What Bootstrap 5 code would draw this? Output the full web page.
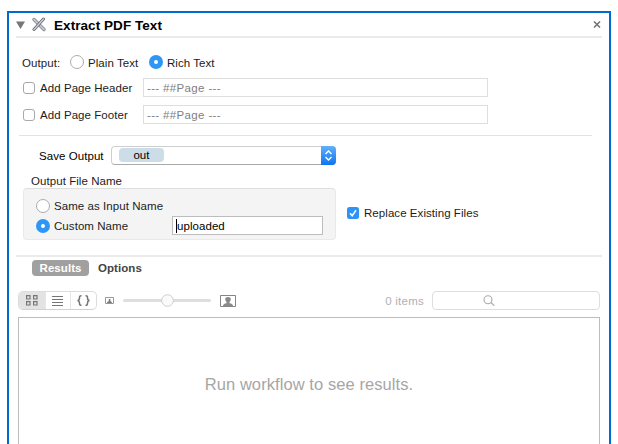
<!DOCTYPE html>
<html lang="en">
<head>
<meta charset="utf-8">
<title>Extract PDF Text</title>
<link href="https://cdn.jsdelivr.net/npm/bootstrap@5.3.0/dist/css/bootstrap.min.css" rel="stylesheet">
<style>
body{font:11.5px/14px "Liberation Sans",Arial,sans-serif;letter-spacing:.06px;color:#1c1c1c;background:#fff;height:444px;overflow:hidden;padding:11px 7px 0}
svg{display:block;flex:none}
.action-panel{width:604px;height:450px;border:2px solid #006bce}
.title-bar{height:25px;margin:0 7px;border-bottom:2px solid #ebebeb}
.tools-icon{margin-left:6px}
.title-text{font-size:13.5px;font-weight:700;line-height:23px;color:#000;margin:2px 0 0 7px}
.close-icon{margin-right:1px}
.radio-dot{width:14px;height:14px;border:1px solid #ababab;border-radius:50%;background:#fff;flex:none}
.radio-dot.on{border:5px solid #2e97f5}
.tick-box{width:12px;height:12px;border:1px solid #a9a9a9;border-radius:3px;background:#fff;flex:none}
.output-row{height:14px;margin:17px 0 9px 13px}
.output-row .output-label{width:48px;padding-top:2px}
.output-row .radio-label{margin-left:4px;padding-top:1px}
.plain-label{width:57px}
.option-row{height:19px;margin-left:14px}
.option-row .tick-label{width:103px;margin-left:5px;padding-top:1px}
.field{border:1px solid #dedede;background:#fff;height:19px;line-height:18px}
.wide-field{width:345px;padding-left:3px;color:#808080;letter-spacing:.35px}
.rule{height:1px;background:#e2e2e2;margin:11px 17px 0 10px}
.save-row{margin:10px 0 0 30px;color:#000}
.save-label{width:66px}
.popup{width:225px;height:19px;border:1px solid #cfcfcf;border-bottom-color:#aaa;border-radius:4px;margin-left:6px}
.token{width:45px;height:14px;margin:1px 0 0 7px;border-radius:4px;background:#cddde8;line-height:15px}
.stepper{width:15px;height:19px;margin:-1px;border-radius:0 4px 4px 0;background:linear-gradient(#63b0f7,#0d74f5)}
.group-title{margin:9px 0 0 22px}
.name-group{width:313px;height:52px;margin-left:14px;border:1px solid #e9e9e9;border-top-color:#dfdfdf;border-radius:4px;background:#f4f4f4;padding:9px 12px 0}
.name-label{margin-left:4px;padding-top:1px}
.custom-row{height:19px;margin-top:3px}
.name-field{width:151px;border-color:#bdbdbd;color:#000;padding-left:3px}
.caret{width:1px;height:14px;background:#000}
.replace-check{margin:0 0 3px 11px}
.replace-check .name-label{margin-left:5px}
.check-on{width:12px;height:12px}
.tab-bar{margin:15px 7px 0;border-top:2px solid #ebebeb;padding:3px 0 0 16px}
.tab-pill{width:57px;height:16px;line-height:17px;border-radius:4px;background:#a0a0a0;color:#fff;font-weight:700}
.tab-plain{line-height:17px;margin-left:9px;color:#444;font-weight:700}
.tool-row{height:19px;margin:14px 9px 0}
.segments{width:79px;height:19px;border:1px solid #dcdcdc;border-bottom-color:#d2d2d2;border-radius:5px;overflow:hidden}
.seg{width:26px;border-left:1px solid #e6e6e6}
.seg.active-seg{background:#e3e3e3;border-left:0}
.small-view{margin-left:8px}
.zoom-track{margin-left:9px}
.large-view{margin-left:9px}
.item-count{color:#b0b0b0;letter-spacing:.25px;padding-top:1px}
.search-box{width:168px;height:19px;border:1px solid #dedede;border-radius:4px;margin-left:8px;padding-left:50px}
.result-area{height:140px;margin:7px 9px 0;border:1px solid #bcbcbc;padding-top:56px;font-size:16.5px;line-height:20px;letter-spacing:.08px;color:#a6a6a6}
</style>
</head>
<body>
<main class="action-panel">
  <header class="title-bar d-flex align-items-center">
    <svg width="9" height="8" viewBox="0 0 9 8"><path d="M0 .5h9L4.500 8z" fill="#777"/></svg>
    <svg class="tools-icon" width="16" height="15" viewBox="0 0 16 15" fill="none" stroke-linecap="round"><path d="M3 2.500l10 10" stroke="#85858f" stroke-width="3.400"/><path d="M3 2.500l10 10" stroke="#c3c3d2" stroke-width="1.800"/><path d="M12.500 2L3 12.500" stroke="#62626c" stroke-width="3"/><path d="M12.500 2L3 12.500" stroke="#d0d0dc" stroke-width="1.400"/></svg>
    <span class="title-text">Extract PDF Text</span>
    <svg class="close-icon ms-auto" width="8" height="7" viewBox="0 0 8 7"><path d="M1 .5l6 6M7 .5l-6 6" stroke="#777" stroke-width="1.600"/></svg>
  </header>

  <div class="output-row d-flex align-items-center">
    <span class="output-label">Output:</span>
    <span class="radio-dot"></span><span class="radio-label"><span class="plain-label d-block">Plain Text</span></span>
    <span class="d-flex align-items-center ms-1"><span class="radio-dot on"></span><span class="radio-label">Rich Text</span></span>
  </div>
  <div class="option-row d-flex align-items-center"><span class="tick-box"></span><span class="tick-label">Add Page Header</span><div class="field wide-field">--- ##Page ---</div></div>
  <div class="option-row d-flex align-items-center mt-2"><span class="tick-box"></span><span class="tick-label">Add Page Footer</span><div class="field wide-field">--- ##Page ---</div></div>
  <div class="rule"></div>

  <div class="save-row d-flex align-items-center">
    <span class="save-label">Save Output</span>
    <div class="popup d-flex justify-content-between">
      <span class="token text-center">out</span>
      <span class="stepper d-flex align-items-center justify-content-center"><svg width="9" height="11" viewBox="0 0 9 11" fill="none" stroke="#fff" stroke-width="1.400"><path d="M1.500 4l3-3 3 3M1.500 7l3 3 3-3"/></svg></span>
    </div>
  </div>

  <div class="group-title">Output File Name</div>
  <div class="d-flex align-items-center">
    <div class="name-group">
      <div class="d-flex align-items-center"><span class="radio-dot"></span><span class="name-label">Same as Input Name</span></div>
      <div class="custom-row d-flex align-items-center"><span class="radio-dot on"></span><span class="name-label">Custom Name</span>
        <div class="field name-field d-flex align-items-center ms-auto"><span class="caret"></span>uploaded</div></div>
    </div>
    <div class="replace-check d-flex align-items-center">
      <svg class="check-on" viewBox="0 0 12 12"><rect width="12" height="12" rx="2.500" fill="#2e94f3"/><path d="M3 6.300l2.200 2.400L9 3.200" fill="none" stroke="#fff" stroke-width="1.500"/></svg>
      <span class="name-label">Replace Existing Files</span>
    </div>
  </div>

  <nav class="tab-bar d-flex"><span class="tab-pill text-center">Results</span><span class="tab-plain">Options</span></nav>

  <div class="tool-row d-flex align-items-center">
    <div class="segments d-flex">
      <span class="seg active-seg d-flex align-items-center justify-content-center"><svg width="12" height="11" viewBox="0 0 12 11" fill="none" stroke="#757575" stroke-width="1.200"><path d="M.6.6h3.400v3.400H.6zM7.600.6H11v3.400H7.600zM.6 6.600h3.400V10H.6zM7.600 6.600H11V10H7.600z"/></svg></span>
      <span class="seg d-flex align-items-center justify-content-center"><svg width="11" height="10" viewBox="0 0 11 10"><path d="M0 .5h11M0 3.500h11M0 6.500h11M0 9.500h11" stroke="#757575"/></svg></span>
      <span class="seg d-flex align-items-center justify-content-center"><svg width="13" height="11" viewBox="0 0 13 11" fill="none" stroke="#757575" stroke-width="1.500"><path d="M4.500.8Q2.500.6 2.500 2.500 2.600 5.300.5 5.500 2.600 5.700 2.500 8.500 2.500 10.400 4.500 10.200M8.500.8Q10.500.6 10.500 2.500 10.400 5.300 12.500 5.500 10.400 5.700 10.500 8.500 10.500 10.400 8.500 10.200"/></svg></span>
    </div>
    <svg class="small-view" width="9" height="7" viewBox="0 0 9 7"><path d="M.5.5h8v6h-8z" fill="none" stroke="#999"/><path d="M2 6q0-1.500 1.800-1.700V2h1.600v2.300Q7 4.500 7 6z" fill="#777"/></svg>
    <svg class="zoom-track" width="88" height="15" viewBox="0 0 88 15"><path d="M1.500 7.500h85" stroke="#dedede" stroke-width="3" stroke-linecap="round"/><circle cx="44.500" cy="7.500" r="5.800" fill="#fafafa" stroke="#cfcfcf"/></svg>
    <svg class="large-view" width="16" height="12" viewBox="0 0 16 12"><path d="M.5.5h15v11H.5z" fill="#fff" stroke="#858585"/><path d="M3 11q0-2.200 3.500-2.700V7Q5.200 6 5.200 4.200 5.200 2 8 2t2.800 2.200Q10.800 6 9.500 7v1.300Q13 8.800 13 11z" fill="#8a8a8a"/></svg>
    <span class="item-count ms-auto">0 items</span>
    <div class="search-box d-flex align-items-center"><svg width="12" height="11" viewBox="0 0 12 11" fill="none" stroke="#aaa" stroke-width="1.100"><circle cx="5" cy="4.700" r="4"/><path d="M8 7.500l3.300 3.200"/></svg></div>
  </div>
  <div class="result-area text-center">Run workflow to see results.</div>
</main>
<script src="https://cdn.jsdelivr.net/npm/bootstrap@5.3.0/dist/js/bootstrap.bundle.min.js"></script>
</body>
</html>
